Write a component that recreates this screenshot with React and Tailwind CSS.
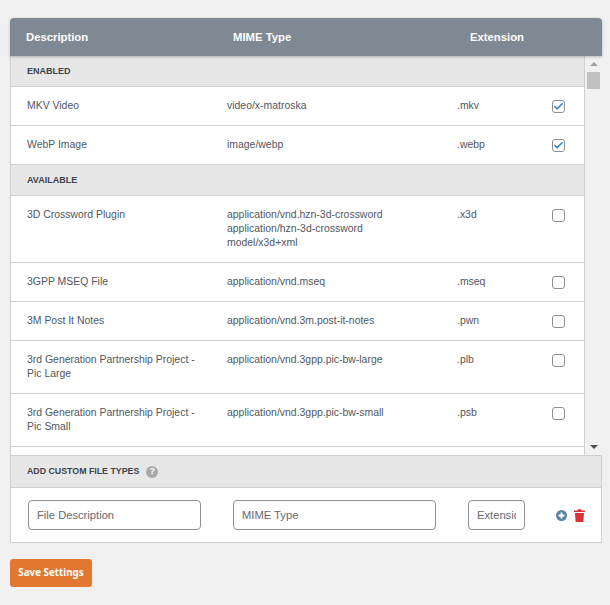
import React from "react";
import { Check } from "lucide-react";

const ENABLED = [
  { name: "MKV Video", mime: ["video/x-matroska"], ext: ".mkv", on: true },
  { name: "WebP Image", mime: ["image/webp"], ext: ".webp", on: true },
];

const AVAILABLE = [
  {
    name: "3D Crossword Plugin",
    mime: [
      "application/vnd.hzn-3d-crossword",
      "application/hzn-3d-crossword",
      "model/x3d+xml",
    ],
    ext: ".x3d",
  },
  { name: "3GPP MSEQ File", mime: ["application/vnd.mseq"], ext: ".mseq" },
  { name: "3M Post It Notes", mime: ["application/vnd.3m.post-it-notes"], ext: ".pwn" },
  {
    name: "3rd Generation Partnership Project - Pic Large",
    mime: ["application/vnd.3gpp.pic-bw-large"],
    ext: ".plb",
  },
  {
    name: "3rd Generation Partnership Project - Pic Small",
    mime: ["application/vnd.3gpp.pic-bw-small"],
    ext: ".psb",
  },
];

const SectionTitle = ({ children }) => (
  <div className="h-[31px] shrink-0 bg-[#e7e7e8] border-b border-[#ccd0d4] pl-4 pt-[9px] text-[9px] leading-[12px] font-bold text-[#3c434a]">
    {children}
  </div>
);

const Row = ({ row }) => (
  <div className="flex shrink-0 border-b border-[#ccd0d4] bg-white pt-3 pb-3 text-[10.45px] leading-[14px] text-[#50575e]">
    <div className="w-[216px] pl-4 pr-[30px]">{row.name}</div>
    <div className="w-[230px]">
      {row.mime.map((m) => (
        <div key={m}>{m}</div>
      ))}
    </div>
    <div className="w-[95px]">{row.ext}</div>
    <div className="mt-px flex h-[13px] w-[13px] items-center justify-center rounded-[3px] border border-[#8c8f94] bg-white">
      {row.on && <Check size={11} strokeWidth={3.5} className="text-[#3582c4]" />}
    </div>
  </div>
);

const Field = ({ placeholder, className }) => (
  <input
    placeholder={placeholder}
    className={`h-[30px] rounded-[4px] border border-[#8c8f94] bg-white px-2 text-[11.2px] text-[#50575e] placeholder:text-[#646970] outline-none ${className}`}
  />
);

export default function App() {
  return (
    <div
      className="h-[605px] overflow-hidden bg-[#f0f0f1] pl-[10px] pr-2 pt-[18px]"
      style={{ fontFamily: "'Liberation Sans', Arial, sans-serif" }}
    >
      {/* Table header */}
      <div className="relative z-10 flex h-[38px] items-center rounded-t-[4px] bg-[#7e8993] text-[11.3px] font-bold text-white shadow-[0_1px_3px_rgba(0,0,0,0.25)]">
        <div className="w-[223px] pl-4">Description</div>
        <div className="w-[237px]">MIME Type</div>
        <div>Extension</div>
      </div>

      {/* Scrolling list */}
      <div className="flex h-[399px] border-l border-[#ccd0d4]">
        <div className="flex min-w-0 flex-1 flex-col overflow-hidden border-r border-[#ccd0d4] bg-white">
          <SectionTitle>ENABLED</SectionTitle>
          {ENABLED.map((r) => (
            <Row key={r.name} row={r} />
          ))}
          <SectionTitle>AVAILABLE</SectionTitle>
          {AVAILABLE.map((r) => (
            <Row key={r.ext} row={r} />
          ))}
        </div>
        <div className="flex w-[17px] shrink-0 flex-col items-center bg-[#f1f1f1]">
          <div className="mt-[6px] h-0 w-0 border-x-[4px] border-b-[4px] border-x-transparent border-b-[#a3a3a3]" />
          <div className="mt-[6px] h-[17px] w-[13px] bg-[#c1c1c1]" />
          <div className="mt-auto mb-[6px] h-0 w-0 border-x-[4px] border-t-[4px] border-x-transparent border-t-[#505050]" />
        </div>
      </div>

      {/* Custom file types */}
      <div className="border border-[#ccd0d4] bg-white">
        <div className="flex h-[32px] items-center gap-[7px] border-b border-[#ccd0d4] bg-[#e7e7e8] pl-4 text-[8.8px] font-bold text-[#3c434a]">
          ADD CUSTOM FILE TYPES
          <span className="flex h-[12px] w-[12px] items-center justify-center rounded-full bg-[#a7aaad] text-[9px] font-bold leading-none text-white">
            ?
          </span>
        </div>
        <div className="flex h-[54px] items-center pl-[17px]">
          <Field placeholder="File Description" className="w-[173px]" />
          <Field placeholder="MIME Type" className="ml-[32px] w-[203px]" />
          <Field placeholder="Extension" className="ml-[32px] w-[57px]" />
          <svg viewBox="0 0 12 12" className="ml-[31px] h-[11px] w-[11px]">
            <circle cx="6" cy="6" r="6" fill="#5b84a0" />
            <path d="M6 2.8v6.4M2.8 6h6.4" stroke="#fff" strokeWidth="2" />
          </svg>
          <svg viewBox="0 0 11 13" className="ml-[7px] h-[13px] w-[11px]">
            <path d="M0 1.5h3.5L4 .3h3l.5 1.2H11V3H0zM1 4h9l-.6 9H1.6z" fill="#dc3232" />
          </svg>
        </div>
      </div>

      <button
        className="mt-[16px] h-[28px] w-[82px] rounded-[3px] bg-[#e27730] text-[9.8px] font-bold text-white"
        style={{ fontFamily: "'Noto Sans', sans-serif" }}
      >
        Save Settings
      </button>
    </div>
  );
}
